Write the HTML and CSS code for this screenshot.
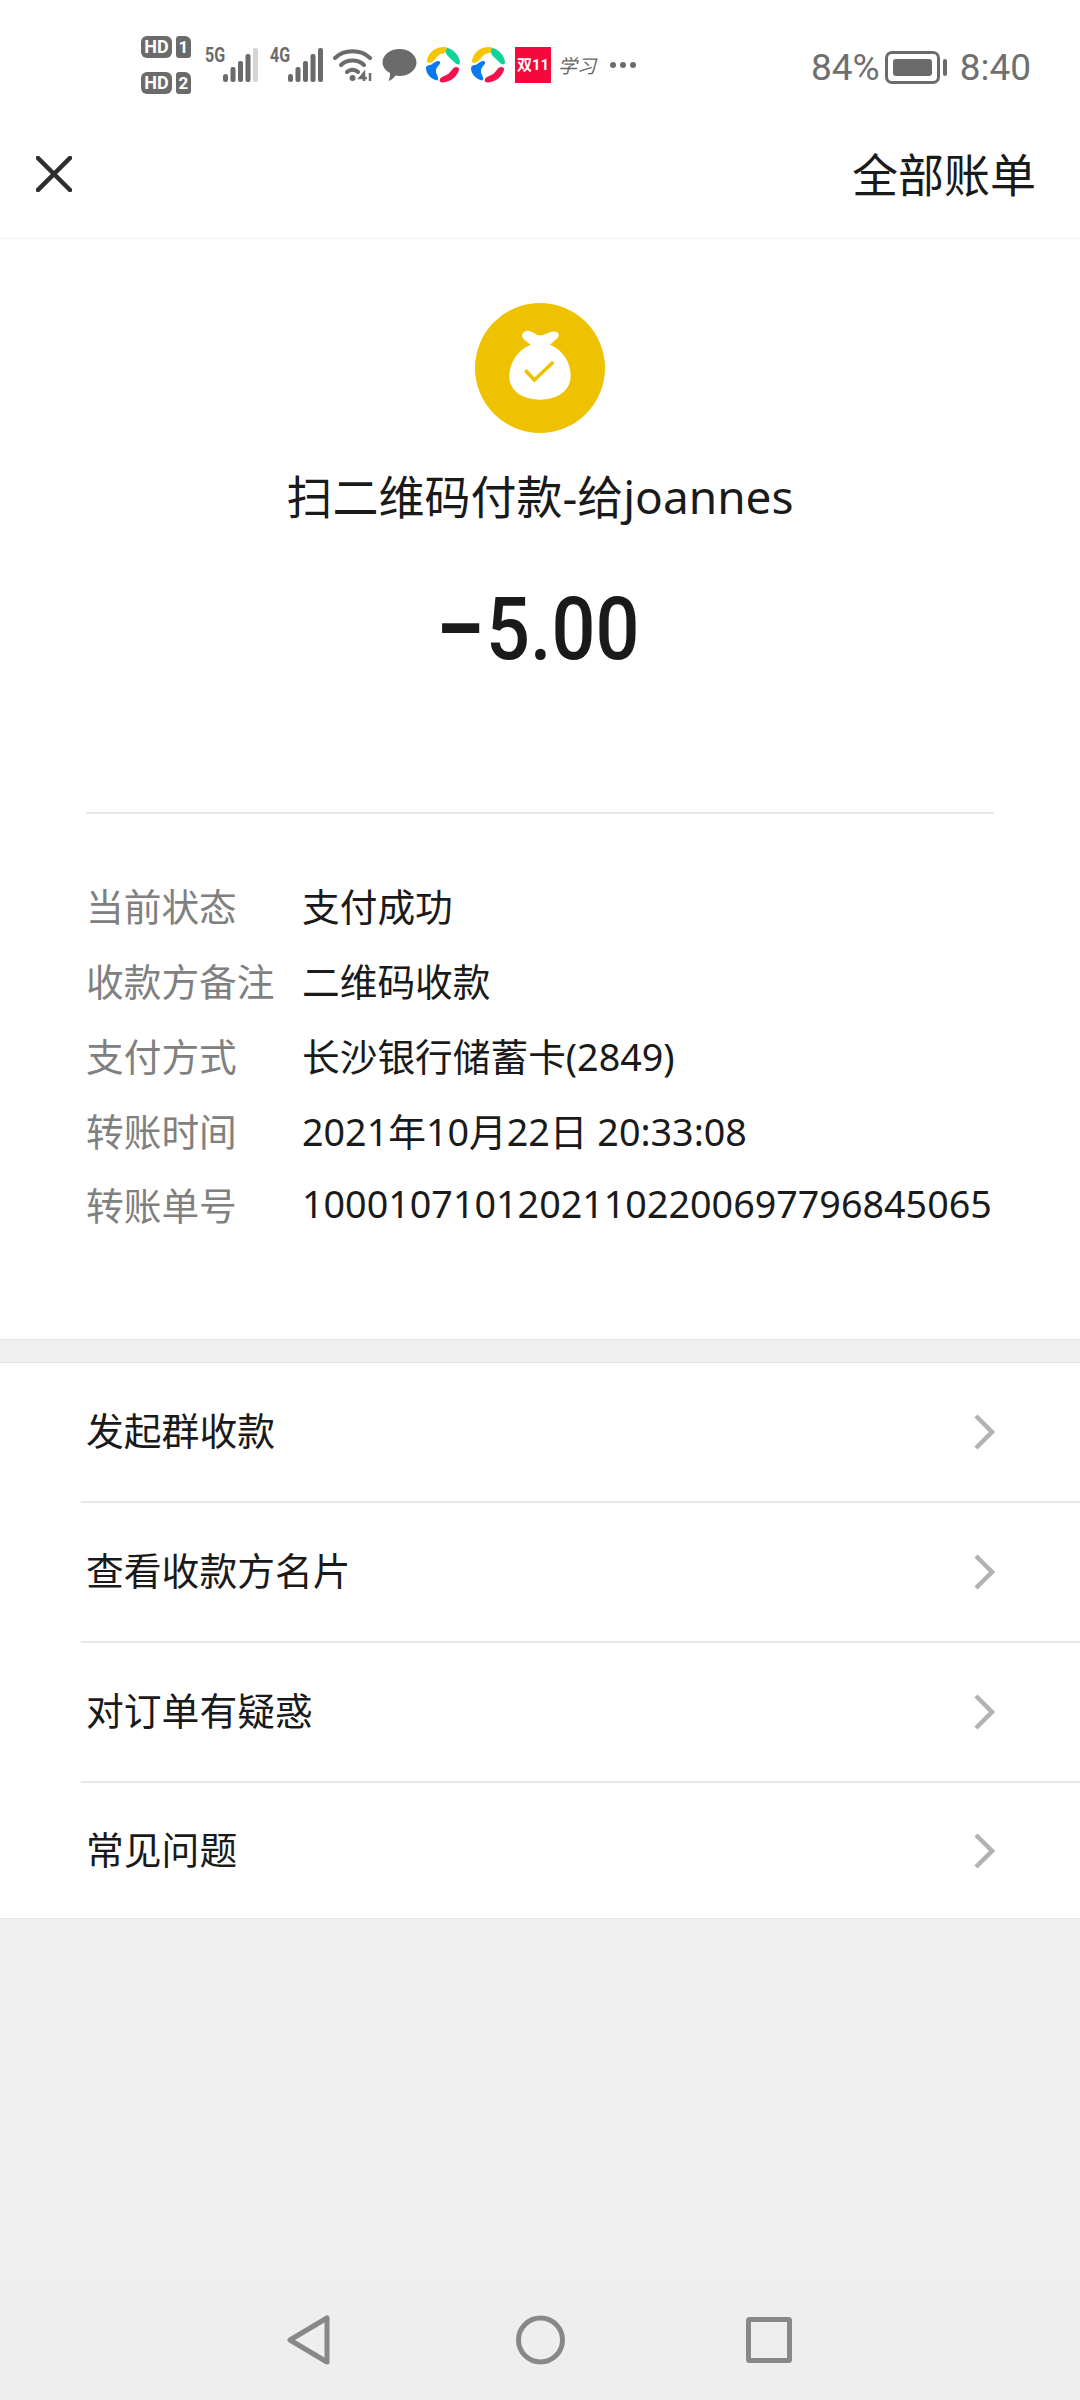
FILE: index.html
```html
<!DOCTYPE html>
<html lang="zh-CN">
<head>
  <meta charset="UTF-8">
  <meta name="viewport" content="width=device-width, initial-scale=1.0">
  <title>账单详情</title>
  <link rel="stylesheet" href="styles.css">
</head>
<body>
  <div class="phone">
    <div class="status-bar">
      <div class="sims">
        <div class="sim"><span class="hd">HD</span><span class="chip">1</span></div>
        <div class="sim"><span class="hd">HD</span><span class="chip">2</span></div>
      </div>
      <span class="net net-5g">5G</span>
      <svg class="signal" width="35" height="34" viewBox="0 0 35 34">
        <rect x="0" y="26" width="5" height="8" rx="2.5" fill="#6b6b6b"/>
        <rect x="7.5" y="19" width="5" height="15" rx="2" fill="#6b6b6b"/>
        <rect x="15" y="13" width="5" height="21" rx="2" fill="#6b6b6b"/>
        <rect x="22.5" y="6" width="5" height="28" rx="2" fill="#6b6b6b"/>
        <rect x="30" y="0" width="5" height="34" rx="2" fill="#d4d4d4"/>
      </svg>
      <span class="net net-4g">4G</span>
      <svg class="signal" width="35" height="34" viewBox="0 0 35 34">
        <rect x="0" y="26" width="5" height="8" rx="2.5" fill="#6b6b6b"/>
        <rect x="7.5" y="19" width="5" height="15" rx="2" fill="#6b6b6b"/>
        <rect x="15" y="13" width="5" height="21" rx="2" fill="#6b6b6b"/>
        <rect x="22.5" y="6" width="5" height="28" rx="2" fill="#6b6b6b"/>
        <rect x="30" y="0" width="5" height="34" rx="2" fill="#6b6b6b"/>
      </svg>
      <svg class="wifi" width="40" height="34" viewBox="0 0 40 34" fill="none" stroke="#6b6b6b" stroke-width="4" stroke-linecap="round">
        <path d="M2 10C11 1 28 1 37 10"/>
        <path d="M8 17C14 11 25 11 31 17"/>
        <path d="M14 24C17 21 22 21 25 24"/>
        <circle cx="19.500" cy="30" r="3" fill="#6b6b6b" stroke="none"/>
        <path d="M31 33V25L27 30H34" stroke-width="2.500" stroke-linecap="butt"/>
        <path d="M37 25V33" stroke-width="2.500" stroke-linecap="butt"/>
      </svg>
      <svg class="bubble" width="35" height="34" viewBox="0 0 35 34">
        <path d="M17.500 1C27 1 34.500 7.300 34.500 14.500C34.500 22 27 28 17.500 28C16 28 14.800 27.900 13.500 27.600C11.800 30 9 32.500 6.500 33C7.700 30.500 8.300 27.500 8 25C3.500 22.500 .5 18.800 .5 14.500C.5 7.300 8 1 17.500 1Z" fill="#6b6b6b"/>
      </svg>
      <svg class="swirl swirl-first" width="34" height="36" viewBox="0 0 34 36">
        <path d="M1 14C2 6 9 0 18 0C20 0 22 .5 22 2C22 6 16 6 13 8C10 10 9 13 6 15C3 16.500 1 16 1 14Z" fill="#f7c600"/>
        <path d="M22 1C28 3 33 8 34 15C34 18 31 18 29 16C27 13 23 11 21 8C19 5 20 1 22 1Z" fill="#0ed39a"/>
        <path d="M12 14C14 14 15 16 13 18C10 21 9 24 11 28C12 30 13 33 11 33.500C5 32 0 27 0 21C0 19 2 18 4 18C6 18 9 14 12 14Z" fill="#0a78f0"/>
        <path d="M30 20C32 20 33.500 21 33 23C31 30 24 35 17 35.500C14 35.500 13 34 14 32C16 29 19 29 22 27C25 25 27 20 30 20Z" fill="#f0134d"/>
      </svg>
      <svg class="swirl" width="34" height="36" viewBox="0 0 34 36">
        <path d="M1 14C2 6 9 0 18 0C20 0 22 .5 22 2C22 6 16 6 13 8C10 10 9 13 6 15C3 16.500 1 16 1 14Z" fill="#f7c600"/>
        <path d="M22 1C28 3 33 8 34 15C34 18 31 18 29 16C27 13 23 11 21 8C19 5 20 1 22 1Z" fill="#0ed39a"/>
        <path d="M12 14C14 14 15 16 13 18C10 21 9 24 11 28C12 30 13 33 11 33.500C5 32 0 27 0 21C0 19 2 18 4 18C6 18 9 14 12 14Z" fill="#0a78f0"/>
        <path d="M30 20C32 20 33.500 21 33 23C31 30 24 35 17 35.500C14 35.500 13 34 14 32C16 29 19 29 22 27C25 25 27 20 30 20Z" fill="#f0134d"/>
      </svg>
      <span class="promo">双11</span>
      <span class="study">学习</span>
      <span class="more"><i></i><i></i><i></i></span>

      <div class="status-right">
        <span>84%</span>
        <span class="battery"><span class="battery-fill"></span></span>
        <span class="battery-nub"></span>
        <span class="clock">8:40</span>
      </div>
    </div>

    <div class="top-nav">
      <svg width="36" height="36" viewBox="0 0 36 36" fill="none" stroke="#2e2e2e" stroke-width="4.500" stroke-linecap="square">
        <path d="M2 2L34 34M34 2L2 34"/>
      </svg>
      <span class="top-nav-link">全部账单</span>
    </div>

    <div class="detail">
      <svg class="pay-icon" width="130" height="130" viewBox="105 68 390 390">
        <circle cx="300" cy="263" r="195" fill="#eec200"/>
        <path d="M262 151C278 151 286 165 301 165C316 165 330 151 347 154C360 157 358 168 350 175C344 181 336 187 330 193C372 210 393 250 392 288C391 334 350 358 300 358C250 358 208 334 208 288C208 250 230 210 272 193C264 187 256 181 250 175C242 166 248 152 262 151Z" fill="#fff"/>
        <path d="M256 270L283 299L340 245" fill="none" stroke="#eec200" stroke-width="11"/>
      </svg>
      <div class="pay-title">扫二维码付款-给joannes</div>
      <div class="amount"><span class="amount-minus">−</span><span class="amount-text">5.00</span></div>

      <div class="info">
        <div class="info-row"><span class="info-label">当前状态</span><span>支付成功</span></div>
        <div class="info-row"><span class="info-label">收款方备注</span><span>二维码收款</span></div>
        <div class="info-row"><span class="info-label">支付方式</span><span>长沙银行储蓄卡(2849)</span></div>
        <div class="info-row"><span class="info-label">转账时间</span><span>2021年10月22日 20:33:08</span></div>
        <div class="info-row"><span class="info-label">转账单号</span><span>10001071012021102200697796845065</span></div>
      </div>
    </div>

    <div class="actions">
      <div class="action"><span>发起群收款</span>
        <svg width="21" height="36" viewBox="0 0 21 36" fill="none" stroke="#b2b2b2" stroke-width="4.500"><path d="M2 2L18 18L2 34"/></svg>
      </div>
      <div class="action"><span>查看收款方名片</span>
        <svg width="21" height="36" viewBox="0 0 21 36" fill="none" stroke="#b2b2b2" stroke-width="4.500"><path d="M2 2L18 18L2 34"/></svg>
      </div>
      <div class="action"><span>对订单有疑惑</span>
        <svg width="21" height="36" viewBox="0 0 21 36" fill="none" stroke="#b2b2b2" stroke-width="4.500"><path d="M2 2L18 18L2 34"/></svg>
      </div>
      <div class="action"><span>常见问题</span>
        <svg width="21" height="36" viewBox="0 0 21 36" fill="none" stroke="#b2b2b2" stroke-width="4.500"><path d="M2 2L18 18L2 34"/></svg>
      </div>
    </div>

    <div class="spacer"></div>

    <div class="system-nav">
      <svg class="nav-back" width="43" height="50" viewBox="0 0 43 50" fill="none" stroke="#888" stroke-width="5" stroke-linejoin="round">
        <path d="M3 25L40 3V47Z"/>
      </svg>
      <svg class="nav-home" width="49" height="50" viewBox="0 0 49 50" fill="none" stroke="#888" stroke-width="5">
        <circle cx="24.500" cy="25" r="22"/>
      </svg>
      <svg width="46" height="46" viewBox="0 0 46 46" fill="none" stroke="#888" stroke-width="5" stroke-linejoin="round">
        <rect x="2.500" y="2.500" width="41" height="41" rx="1"/>
      </svg>
    </div>
  </div>
</body>
</html>
```

FILE: styles.css
```css
* {
  box-sizing: border-box;
}

body {
  margin: 0;
  background-color: #efefef;
  color: #1a1a1a;
  font-family: "Noto Sans", "Noto Sans CJK SC", sans-serif;
}

.phone {
  width: 1080px;
  height: 2400px;
  display: flex;
  flex-direction: column;
}

.status-bar {
  height: 110px;
  padding: 20px 49px 0 141px;
  display: flex;
  align-items: center;
  background-color: #fff;
  color: #6f6f6f;
}

.sims {
  width: 50px;
  display: flex;
  flex-direction: column;
  gap: 14px;
}

.sim {
  display: flex;
  justify-content: space-between;
}

.hd {
  width: 31px;
  height: 22px;
  border-radius: 6px;
  background-color: #6b6b6b;
  color: #fff;
  font: bold 18px/22px Roboto, sans-serif;
  text-align: center;
}

.chip {
  width: 15px;
  height: 22px;
  border-radius: 3px 6px 3px 3px;
  background-color: #6b6b6b;
  color: #fff;
  font: bold 17px/22px Roboto, sans-serif;
  text-align: center;
}

.net {
  width: 18px;
  margin-bottom: 20px;
  color: #6b6b6b;
  font: bold 20px/16px Roboto, sans-serif;
  transform: scaleX(0.8);
  transform-origin: left center;
}

.net-5g {
  margin-left: 14px;
}

.net-4g {
  margin-left: 12px;
}

.wifi {
  margin-left: 10px;
}

.bubble {
  margin-left: 9px;
}

.swirl-first {
  margin: 0 11px 0 9px;
}

.promo {
  width: 36px;
  height: 36px;
  margin-left: 10px;
  background-color: #f5093c;
  color: #fff;
  font: bold 15px/36px Roboto, "Noto Sans CJK SC", sans-serif;
  text-align: center;
}

.study {
  width: 38px;
  margin-left: 7px;
  color: #666;
  font: italic 19px/36px "Noto Sans CJK SC", sans-serif;
  white-space: nowrap;
}

.more {
  margin-left: 14px;
  display: flex;
  gap: 4px;
}

.more i {
  width: 6px;
  height: 6px;
  border-radius: 50%;
  background-color: #6b6b6b;
}

.status-right {
  margin: 5px 0 0 auto;
  display: flex;
  align-items: center;
  font: 37px/44px Roboto, sans-serif;
}

.battery {
  width: 55px;
  height: 33px;
  margin-left: 5px;
  padding: 5px;
  border: 3px solid #6b6b6b;
  border-radius: 7px;
}

.battery-fill {
  display: block;
  width: 100%;
  height: 100%;
  border-radius: 3px;
  background-color: #6b6b6b;
}

.battery-nub {
  width: 4px;
  height: 17px;
  margin-left: 3px;
  border-radius: 2px;
  background-color: #6b6b6b;
}

.clock {
  margin-left: 13px;
}

.top-nav {
  height: 129px;
  padding: 0 44px 1px 36px;
  display: flex;
  justify-content: space-between;
  align-items: center;
  background-color: #fff;
  border-bottom: 1px solid #f2f2f2;
}

.top-nav-link {
  font-size: 46px;
  line-height: 60px;
}

.detail {
  height: 1101px;
  padding-top: 64px;
  display: flex;
  flex-direction: column;
  align-items: center;
  background-color: #fff;
  border-bottom: 1px solid #e2e2e2;
}

.pay-title {
  margin-top: 33px;
  font-size: 46px;
  line-height: 60px;
}

.amount {
  margin-top: 53px;
  height: 100px;
  padding-right: 8px;
  display: flex;
  font: 500 88px/100px Roboto, sans-serif;
}

.amount-minus {
  width: 50px;
  font-weight: 700;
}

.amount-text {
  width: 150px;
  white-space: nowrap;
  transform: scaleX(0.88);
  transform-origin: left center;
}

.info {
  width: 908px;
  margin-top: 133px;
  padding-top: 57px;
  border-top: 2px solid #e8e8e8;
}

.info-row {
  height: 74.75px;
  padding-bottom: 7px;
  display: flex;
  align-items: center;
  font-size: 37.7px;
  white-space: nowrap;
}

.info-label {
  width: 216px;
  flex-shrink: 0;
  color: #808080;
}

.actions {
  margin-top: 22px;
  background-color: #fff;
  border-top: 1px solid #e2e2e2;
  border-bottom: 1px solid #e8e8e8;
  padding-left: 81px;
}

.action {
  height: 140px;
  padding: 0 85px 0 5px;
  display: flex;
  justify-content: space-between;
  align-items: center;
  border-bottom: 2px solid #e8e8e8;
  font-size: 37.8px;
}

.action span {
  margin-bottom: 7px;
}

.action:last-child {
  height: 135px;
  border-bottom: none;
}

.spacer {
  flex: 1;
}

.system-nav {
  height: 120px;
  padding-left: 287px;
  display: flex;
  align-items: center;
  background-color: #eee;
}

.nav-back {
  margin-right: 186px;
}

.nav-home {
  margin-right: 181px;
}
```
